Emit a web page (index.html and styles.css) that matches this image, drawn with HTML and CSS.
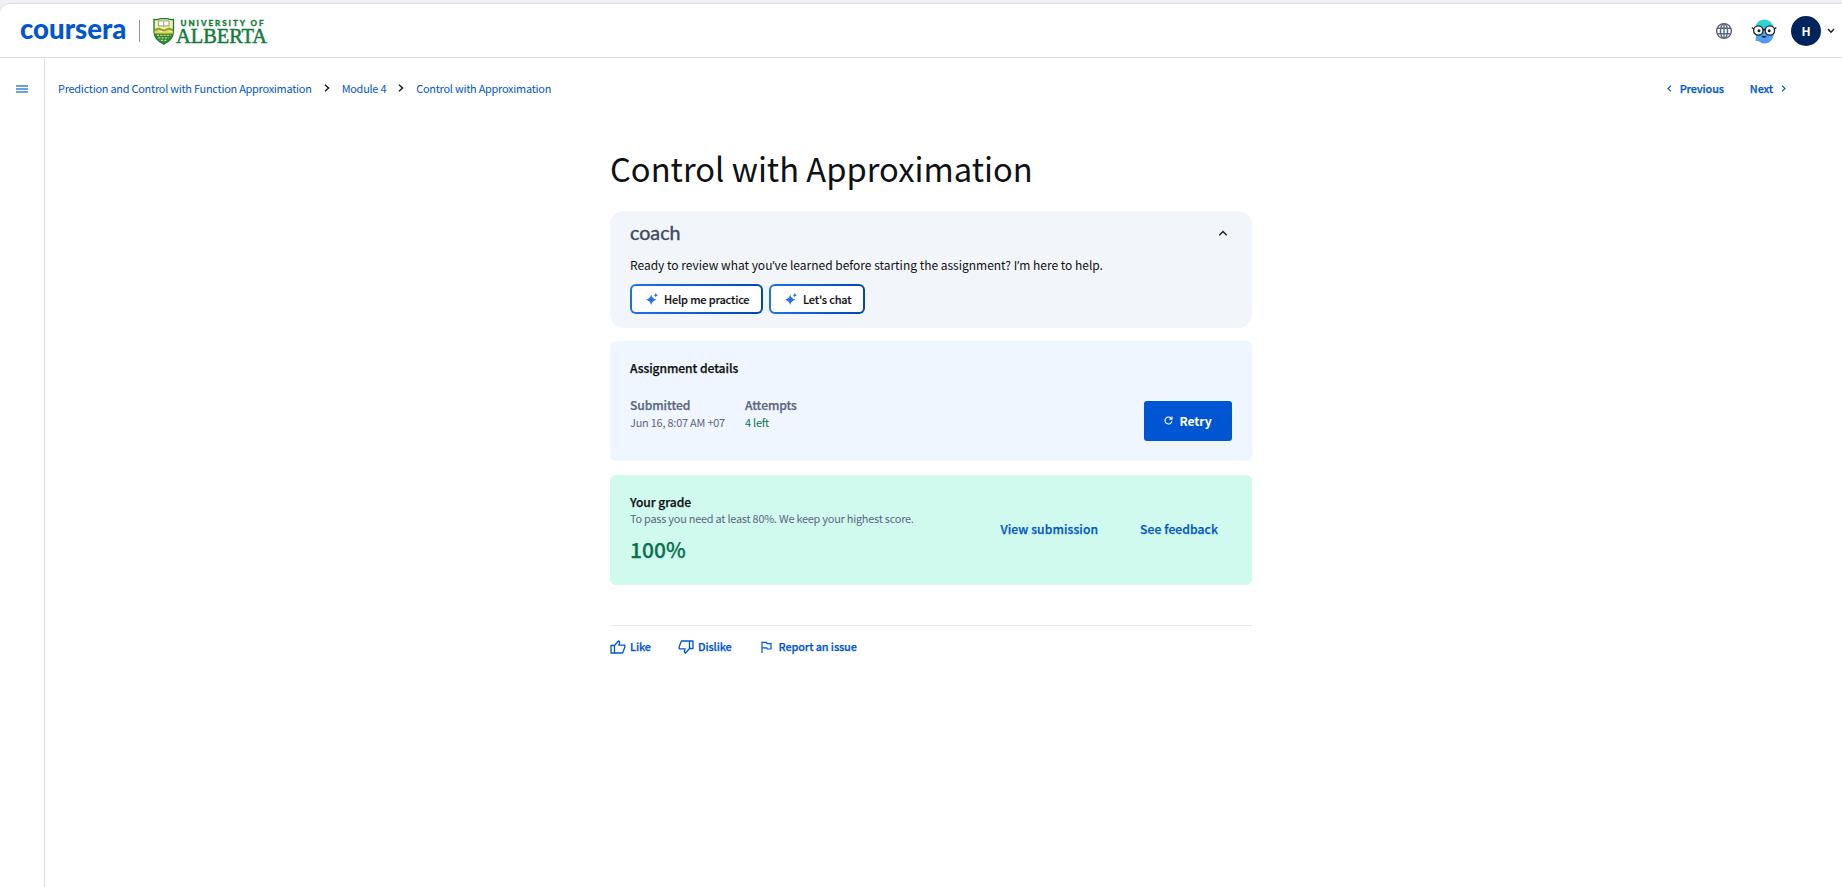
FILE: index.html
```
<!DOCTYPE html>
<html lang="en">
<head>
<meta charset="utf-8">
<title>Control with Approximation | Coursera</title>
<link rel="stylesheet" href="styles.css">
</head>
<body>
<div class="app">
  <header class="topbar">
    <div class="brand">
      <svg class="wordmark" width="110" height="40" viewBox="0 0 110 40"><text x="0" y="28" textLength="106.500" lengthAdjust="spacingAndGlyphs">coursera</text></svg>
      <span class="brand-rule"></span>
      <svg class="partner" width="116" height="40" viewBox="0 -6 116 40">
        <g transform="translate(0 .9)">
        <path d="M1 1.500Q5 2 7 .8H15Q17 2 20.500 1.500V14Q20 22 10.800 26.200Q1.500 22 1 14Z" fill="#f5efb0" stroke="#157a3c" stroke-width="1.300"/>
        <path d="M5.500 3H10L10.800 3.600 11.600 3H16V8H11.600L10.800 8.600 10 8H5.500Z" fill="#fff" stroke="#7b8a4f" stroke-width=".8"/>
        <path d="M10.800 3.600V8.400" stroke="#7b8a4f" stroke-width=".8"/>
        <path d="M1.500 11 6 9.500 10.800 11.500 16 9.500 20.200 11V13.500L16 12 10.800 13.500 6 12 1.500 13.500Z" fill="#8ca32c"/>
        <path d="M1.500 13.500Q4 12 6.500 13.500T11.500 13.500T16.500 13.500T20.200 13.500V15.500H1.500Z" fill="#e8d93a"/>
        <path d="M1.500 15.500H20Q18.500 22 10.800 25.500Q3.500 22 1.500 15.500Z" fill="#2f8540"/>
        <path d="M4 17.500H18M5.500 20H16M8 22.500H14" stroke="#e8dc62" stroke-width="1.100" stroke-dasharray="2 1.300"/>
        </g>
        <text class="partner-top" x="27.500" y="9.300" textLength="83" lengthAdjust="spacing">UNIVERSITY OF</text>
        <text class="partner-name" x="23" y="26" textLength="91" lengthAdjust="spacingAndGlyphs">ALBERTA</text>
      </svg>
    </div>
    <div class="account">
      <svg width="18" height="18" viewBox="0 0 18 18" fill="none" stroke="#5b6780" stroke-width="1.400"><circle cx="9" cy="9" r="7.400"/><ellipse cx="9" cy="9" rx="3.500" ry="7.400"/><path d="M9 1.700V16.300M2.300 6.300H15.700M2.300 11.700H15.700"/></svg>
      <svg class="coach-face" width="26" height="26" viewBox="0 0 26 26">
        <defs><linearGradient id="face" x1="0" y1="0" x2="0" y2="1"><stop offset="0" stop-color="#25e0c8"/><stop offset=".5" stop-color="#4cb8ee"/><stop offset="1" stop-color="#5b8cff"/></linearGradient></defs>
        <path d="M13 1.500C19 1.500 23.200 6 23.200 13.500S19 25.500 13.500 25.500Q10 25.500 8.500 23.500L4.500 22.800 5.200 18.500Q3.200 15.500 3.800 11.500C4.500 5.500 8 1.500 13 1.500Z" fill="url(#face)"/>
        <g fill="#fff" stroke="#16202b" stroke-width="1.300"><circle cx="7.300" cy="12.500" r="4.700"/><circle cx="18.900" cy="12.500" r="4.700"/></g>
        <path d="M12 11.800Q13.100 10.800 14.200 11.800M2.800 11 .8 9.500M23.400 11 25.300 9.500M10.800 18Q13 20 15.300 18" fill="none" stroke="#16202b" stroke-width="1.200"/>
        <circle cx="8" cy="12.800" r="1.500" fill="#16202b"/><circle cx="18.200" cy="12.800" r="1.500" fill="#16202b"/>
      </svg>
      <span class="avatar">H</span>
      <svg width="8" height="6" viewBox="0 0 8 6" fill="none" stroke="#1f1f1f" stroke-width="1.400"><path d="M1 1 4 4.200 7 1"/></svg>
    </div>
  </header>
  <div class="body">
    <aside class="rail"><svg width="12" height="9" viewBox="0 0 12 9" fill="#6ba0e6"><path d="M0 0H12V2H0ZM0 3H12V5H0ZM0 6H12V8H0Z"/></svg></aside>
    <main class="main">
      <div class="crumbbar">
        <nav class="crumbs">
          <a class="crumb">Prediction and Control with Function Approximation</a>
          <svg width="6" height="8" viewBox="0 0 6 8" fill="none" stroke="#1f1f1f" stroke-width="1.500"><path d="M1 .7 4.500 4 1 7.300"/></svg>
          <a class="crumb">Module 4</a>
          <svg width="6" height="8" viewBox="0 0 6 8" fill="none" stroke="#1f1f1f" stroke-width="1.500"><path d="M1 .7 4.500 4 1 7.300"/></svg>
          <a class="crumb">Control with Approximation</a>
        </nav>
        <nav class="pager">
          <a class="page-link"><svg width="5" height="7" viewBox="0 0 5 7" fill="none" stroke="#0056d2" stroke-width="1.200"><path d="M4 .6 1 3.500 4 6.400"/></svg><span>Previous</span></a>
          <a class="page-link"><span>Next</span><svg width="5" height="7" viewBox="0 0 5 7" fill="none" stroke="#0056d2" stroke-width="1.200"><path d="M1 .6 4 3.500 1 6.400"/></svg></a>
        </nav>
      </div>
      <div class="column">
        <h1 class="title">Control with Approximation</h1>
        <section class="card coach">
          <div class="coach-head">
            <svg class="coach-logo" width="54" height="32" viewBox="0 0 54 32"><text x="0" y="22.500" textLength="50.500" lengthAdjust="spacingAndGlyphs">coach</text></svg>
            <svg width="10" height="6" viewBox="0 0 10 6" fill="none" stroke="#1f1f1f" stroke-width="1.500"><path d="M1.300 5.200 5 1.500 8.700 5.200"/></svg>
          </div>
          <p class="coach-text">Ready to review what you<span class="apos">’</span>ve learned before starting the assignment? I<span class="apos">’</span>m here to help.</p>
          <div class="coach-actions">
            <button class="chip chip-practice"><svg width="12" height="12" viewBox="0 0 12 12" fill="#2272eb"><path d="M5.200 1.500Q6.200 5.800 10.500 6.700 6.200 7.600 5.200 12 4.200 7.600 0 6.700 4.200 5.800 5.200 1.500Z"/><path d="M9.800 0Q10.100 1.900 12 2.200 10.100 2.500 9.800 4.200 9.500 2.500 7.800 2.200 9.500 1.900 9.800 0Z"/></svg><span>Help me practice</span></button>
            <button class="chip chip-chat"><svg width="12" height="12" viewBox="0 0 12 12" fill="#2272eb"><path d="M5.200 1.500Q6.200 5.800 10.500 6.700 6.200 7.600 5.200 12 4.200 7.600 0 6.700 4.200 5.800 5.200 1.500Z"/><path d="M9.800 0Q10.100 1.900 12 2.200 10.100 2.500 9.800 4.200 9.500 2.500 7.800 2.200 9.500 1.900 9.800 0Z"/></svg><span>Let's chat</span></button>
          </div>
        </section>
        <section class="card details">
          <h2 class="card-title">Assignment details</h2>
          <div class="details-row">
            <dl class="facts">
              <div><dt class="fact-label">Submitted</dt><dd class="fact-value">Jun 16, 8:07 AM +07</dd></div>
              <div><dt class="fact-label">Attempts</dt><dd class="fact-value value-left">4 left</dd></div>
            </dl>
            <button class="retry"><svg width="9" height="9" viewBox="0 0 10 10" fill="none" stroke="#fff" stroke-width="1.200"><path d="M8.800 5.800A3.900 3.900 0 1 1 8.300 2.900M8.900 .6V3.500H6"/></svg><span>Retry</span></button>
          </div>
        </section>
        <section class="card grade">
          <div>
            <h2 class="card-title">Your grade</h2>
            <p class="grade-note">To pass you need at least 80%. We keep your highest score.</p>
            <p class="score">100%</p>
          </div>
          <div class="grade-links"><a>View submission</a><a>See feedback</a></div>
        </section>
        <footer class="feedback">
          <a class="react"><svg width="16" height="14" viewBox="0 0 16 14" fill="none" stroke="#0056d2" stroke-width="1.300" stroke-linejoin="round"><path d="M1 5.500H4.500V13H1ZM4.500 5.500 8.600 .8Q10 1.300 9.600 2.800L8.900 5.200H14.800V7.300L12.600 13H4.500"/></svg><span>Like</span></a>
          <a class="react dislike"><svg width="16" height="14" viewBox="0 0 16 14" fill="none" stroke="#0056d2" stroke-width="1.300" stroke-linejoin="round"><path d="M15 8.500H11.500V1H15ZM11.500 8.500 7.400 13.200Q6 12.700 6.400 11.200L7.100 8.800H1.200V6.700L3.400 1H11.500"/></svg><span>Dislike</span></a>
          <a class="react report"><svg width="11" height="12" viewBox="0 0 11 12" fill="none" stroke="#0056d2" stroke-width="1.200"><path d="M1 12V1.300H5.600L6 2.600H10V8H6.200L5.800 6.800H1"/></svg><span>Report an issue</span></a>
        </footer>
      </div>
    </main>
  </div>
</div>
</body>
</html>
```
FILE: styles.css
```
* { box-sizing: border-box; }
body { margin: 0; background: #f0eff4; color: #0f1114; font-family: "Noto Sans CJK SC", "Noto Sans", sans-serif; font-size: 12.1px; line-height: 18px; }
h1, h2, p, dl, dd { margin: 0; font-weight: 400; }
button { font: inherit; border: 0; margin: 0; padding: 0; }
svg { display: block; flex: none; }
span, a, h1, h2, p, dt, dd { white-space: nowrap; }
.app { height: 884px; margin-top: 3px; display: flex; flex-direction: column; background: #fff; border-top: 1px solid #dadce0; border-top-left-radius: 10px; overflow: hidden; }
.topbar { height: 54px; flex: none; display: flex; justify-content: space-between; align-items: center; padding: 0 7px 0 20px; border-bottom: 1px solid #dae1ed; }
.brand, .account { display: flex; align-items: center; }
.wordmark text { font: 900 27.5px Lato, sans-serif; fill: #0056d2; }
.brand-rule { width: 1px; height: 22px; background: #8495b0; margin: 0 13px 0 9px; }
.partner-top { font: 900 8px Lato, sans-serif; fill: #157a3c; stroke: #157a3c; stroke-width: .3px; }
.partner-name { font: 400 20.5px "Liberation Serif", serif; fill: #157a3c; stroke: #157a3c; stroke-width: .5px; }
.coach-face { margin-left: 18px; }
.avatar { width: 30px; height: 30px; border-radius: 50%; background: #00255d; color: #fff; font-weight: 700; display: flex; justify-content: center; align-items: center; margin: 0 6px 0 14px; }
.body { flex: 1; display: flex; }
.rail { width: 45px; border-right: 1px solid #dae1ed; padding: 27px 0 0 16px; }
.main { flex: 1; }
.crumbbar { display: flex; justify-content: space-between; padding: 21px 56px 0 13px; color: #0056d2; }
.crumbs { display: flex; align-items: center; gap: 12px; }
.crumb { font-size: 10.9px; letter-spacing: -.23px; }
.pager { display: flex; gap: 26px; font-size: 10.8px; font-weight: 500; letter-spacing: -.1px; -webkit-text-stroke: .25px; }
.page-link { display: flex; align-items: center; gap: 8px; }
.column { width: 642px; margin: 49px 0 0 565px; }
.title { font-size: 32.7px; line-height: 44px; }
.card { border-radius: 6px; padding: 0 20px; }
.coach { height: 117px; margin-top: 21px; border-radius: 14px; background: #f2f5fa; padding-top: 12px; }
.coach-head { display: flex; justify-content: space-between; align-items: center; padding-right: 4px; height: 20px; }
.coach-logo text { font: 400 20px Lato, sans-serif; fill: #3d4a62; stroke: #3d4a62; stroke-width: .4px; }
.coach-text { margin-top: 13px; font-size: 12px; line-height: 17px; letter-spacing: -.01px; }
.apos { font-family: "Open Sans", sans-serif; line-height: 1; }
.coach-actions { display: flex; gap: 6px; margin-top: 11px; }
.chip { height: 30px; display: flex; align-items: center; gap: 6px; padding: 0 0 1px 14px; font-size: 11px; font-weight: 500; letter-spacing: -.18px; color: #0f1114; border: 2px solid transparent; border-radius: 6px; background: linear-gradient(#fff, #fff) padding-box, linear-gradient(90deg, #1f70eb, #0048b0) border-box; -webkit-text-stroke: .15px; }
.chip-practice { width: 133px; }
.chip-chat { width: 96px; }
.details { height: 120px; margin-top: 13px; background: #f0f6ff; padding-top: 18px; }
.card-title { font-size: 12.1px; font-weight: 500; letter-spacing: -.07px; -webkit-text-stroke: .25px; }
.details-row { display: flex; justify-content: space-between; margin-top: 19px; }
.facts { display: flex; gap: 20px; }
.fact-label { color: #5b6780; font-weight: 500; letter-spacing: -.07px; -webkit-text-stroke: .25px; }
.fact-value { color: #5b6780; font-size: 10.9px; letter-spacing: -.2px; line-height: 16px; }
.value-left { color: #087051; }
.retry { width: 88px; height: 40px; margin-top: 5px; padding-bottom: 1px; border-radius: 3px; background: #0056d2; color: #fff; font-weight: 700; letter-spacing: -.05px; display: flex; align-items: center; justify-content: center; gap: 6px; }
.grade { height: 110px; margin-top: 14px; background: #d1faee; display: flex; justify-content: space-between; padding-top: 18px; }
.grade-note { color: #5b6780; font-size: 10.9px; letter-spacing: -.22px; line-height: 15px; }
.score { color: #087051; font-size: 21px; font-weight: 500; line-height: 28px; margin-top: 9px; -webkit-text-stroke: .25px; }
.grade-links { display: flex; gap: 42px; padding: 27px 14px 0 0; color: #0056d2; font-weight: 500; letter-spacing: .1px; -webkit-text-stroke: .25px; }
.feedback { margin-top: 40px; border-top: 1px solid #e3e8f1; padding-top: 12px; display: flex; color: #0056d2; font-size: 10.9px; font-weight: 500; letter-spacing: -.12px; -webkit-text-stroke: .25px; }
.react { display: flex; align-items: center; gap: 4px; }
.react span { margin-top: -1px; }
.dislike { margin-left: 27px; }
.report { margin-left: 29px; gap: 7px; }
```
